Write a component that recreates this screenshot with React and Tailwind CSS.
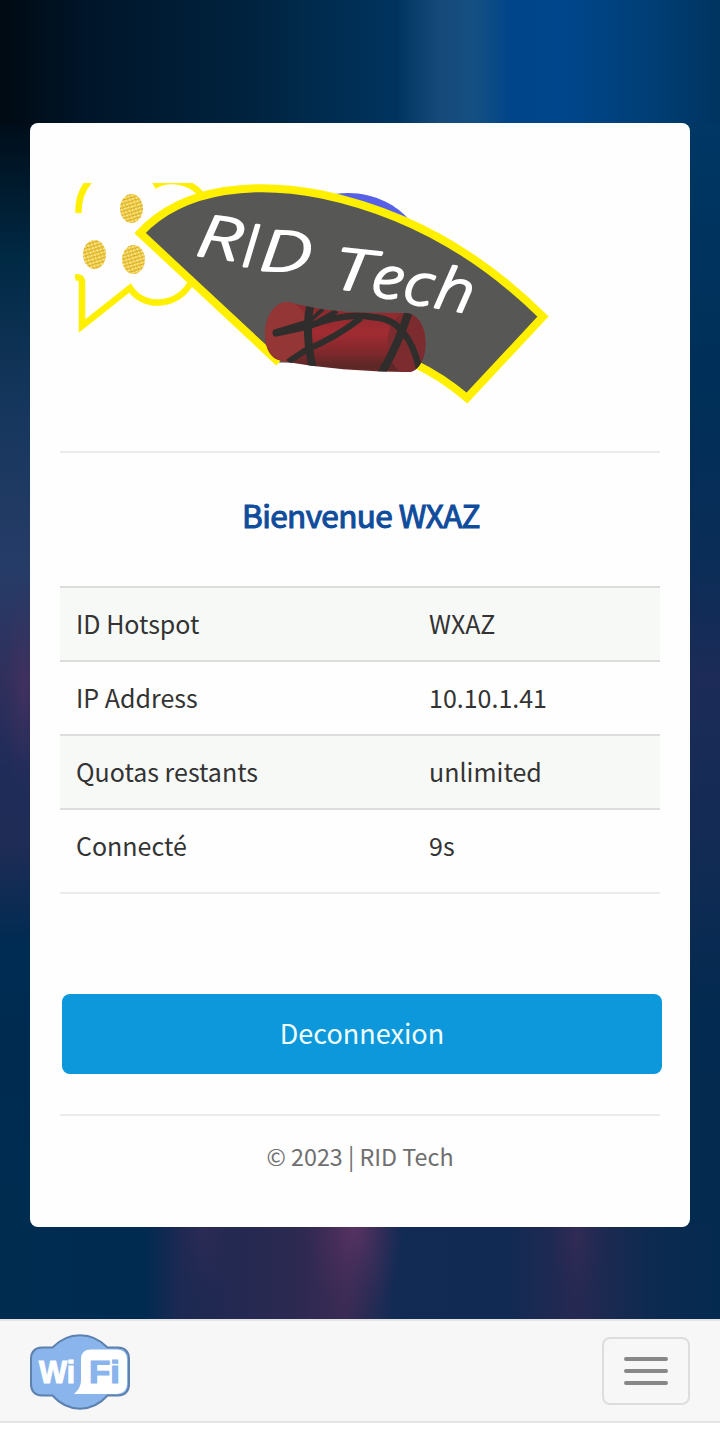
const rows = [
  ['ID Hotspot', 'WXAZ'],
  ['IP Address', '10.10.1.41'],
  ['Quotas restants', 'unlimited'],
  ['Connecté', '9s'],
];

const coins = [[131.5, 208.5], [94.5, 254.5], [133.5, 259.5]];

// character, x, baseline, rotation, horizontal stretch, font size
const letters = [
  ['R', 195, 255, 8, 1.34, 58],
  ['I', 241, 266, 4, 1.05, 59],
  ['D', 259, 270, 3, 1.38, 56],
  ['T', 332, 288, 6, 1.38, 57],
  ['e', 370, 296, 6, 1.15, 57],
  ['c', 402, 303, 6, 1.15, 57],
  ['h', 433, 307, 10, 1.16, 58],
];

function Logo() {
  return (
    <svg className="block" width="480" height="224" viewBox="75 183 480 224">
      <defs>
        <pattern id="grain" width="5" height="5" patternUnits="userSpaceOnUse" patternTransform="rotate(28)">
          <rect width="5" height="5" fill="#f0ce46" />
          <path d="M0 1h2M3 2.5h2M1 4h2" stroke="#d3a01a" strokeWidth="1" />
          <path d="M2.5 .6h1.5M0 3h1.5" stroke="#fff6c4" strokeWidth="1.3" />
        </pattern>
        <linearGradient id="barrel" x1="0" y1="0" x2="0" y2="1">
          <stop offset="0" stopColor="#84292c" />
          <stop offset=".45" stopColor="#a12c32" />
          <stop offset=".7" stopColor="#7f282b" />
          <stop offset=".88" stopColor="#5a2826" />
          <stop offset="1" stopColor="#7a2629" />
        </linearGradient>
        <clipPath id="roll">
          <path d="M288 302 C315 309 340 312 365 312.500 L405 313 C417 313 425.500 325 425.500 343 C425.500 361 417 372 409 372 C365 372 320 368 282 361 C270 359 265 348 265 334 C265 316 276 301 288 302Z" />
        </clipPath>
      </defs>
      <g fill="none" stroke="#fff000" strokeWidth="6.500">
        <path d="M78.500 213 C78 200 82 188 92 178" />
        <path d="M154 186 C170 177 190 181 201 194" />
        <path d="M75 277.500 Q82 276 82 283 L82 326 L130 288 C143 309 177 307 190 284" />
      </g>
      {coins.map(([cx, cy]) => (
        <ellipse key={cx} cx={cx} cy={cy} rx="11.500" ry="14.500" fill="url(#grain)" />
      ))}
      <path d="M335 194 C367 189 396 203 410 221 L380 215Z" fill="#5661e8" />
      <path d="M279 362.500 L140 233 C185 185 260 182 322 194.500 C405 212 480 254 543 316.500 L467 398 C448 382 434 373 415 364" fill="#575856" stroke="#fff000" strokeWidth="8" />
      <g fill="#fff" stroke="#fff" strokeWidth="2.400" strokeLinejoin="round" fontFamily="'Open Sans', sans-serif" fontStyle="italic" fontWeight="300">
        {letters.map(([c, x, y, r, k, s]) => (
          <text key={c} fontSize={s} transform={`translate(${x} ${y}) rotate(${r}) scale(${k} 1)`}>{c}</text>
        ))}
      </g>
      <g clipPath="url(#roll)">
        <rect x="260" y="298" width="170" height="78" fill="url(#barrel)" />
        <ellipse cx="286" cy="332" rx="22" ry="31" fill="#943536" />
        <ellipse cx="407" cy="343" rx="19.500" ry="30" fill="#7c2b2e" />
        <g fill="none" stroke="#2f2e2c" strokeWidth="6.500">
          <path d="M309 326 Q345 312 372 317 Q392 318 403 332 Q414 345 419 368" />
          <path d="M276 333 L309 326" strokeWidth="7" strokeLinecap="round" />
          <path d="M276 332 L309 322" strokeWidth="6" strokeLinecap="round" />
          <path d="M311 302 Q304 331 313 370" strokeWidth="8" />
          <path d="M361 318 Q335 338 306 350 L288 362" strokeWidth="6" />
          <path d="M337 311 L312 325" strokeWidth="5" />
          <path d="M323 309 L311 320" strokeWidth="4" />
          <path d="M409 311 Q398 345 381 374" strokeWidth="8" />
        </g>
      </g>
    </svg>
  );
}

function WifiBadge() {
  return (
    <svg className="mt-0.5 block" width="100" height="76" viewBox="0 0 100 76">
      <path d="M12 13.500 H22.500 C38 -3 62 -3 77.500 13.500 H88 Q99 14 99 25 V50 Q99 61 88 61.500 H77.500 C62 79 38 79 22.500 61.500 H12 Q1 61 1 50 V25 Q1 14 12 13.500Z" fill="#89b4ec" stroke="#5d82af" strokeWidth="2" />
      <path d="M61 15.500 H87 Q97 16 97 25 V50 Q97 59 87 60 H44 Q51 54 51 46 V25 Q51 15.500 61 15.500Z" fill="#fff" />
      <g fontFamily="'Liberation Sans', Arial, sans-serif" fontWeight="bold" fontSize="32" strokeWidth="1.200">
        <text x="9" y="48.500" textLength="36" lengthAdjust="spacingAndGlyphs" fill="#fff" stroke="#fff">Wi</text>
        <text x="59" y="48.500" textLength="31" lengthAdjust="spacingAndGlyphs" fill="#89b4ec" stroke="#89b4ec">Fi</text>
      </g>
    </svg>
  );
}

function Backdrop() {
  return (
    <svg className="absolute inset-0" width="720" height="1319" viewBox="0 0 720 1319">
      <defs>
        <linearGradient id="top">
          <stop offset="0" stopColor="#000a12" />
          <stop offset=".12" stopColor="#001529" />
          <stop offset=".35" stopColor="#00233f" />
          <stop offset=".55" stopColor="#00345f" />
          <stop offset=".61" stopColor="#164a7a" />
          <stop offset=".66" stopColor="#144f83" />
          <stop offset=".71" stopColor="#004589" />
          <stop offset=".78" stopColor="#00468c" />
          <stop offset=".9" stopColor="#003f76" />
          <stop offset="1" stopColor="#003460" />
        </linearGradient>
        <linearGradient id="left" x1="0" y1="0" x2="0" y2="1">
          <stop offset="0" stopColor="#000d19" />
          <stop offset=".12" stopColor="#002944" />
          <stop offset=".25" stopColor="#15365c" />
          <stop offset=".4" stopColor="#263c68" />
          <stop offset=".5" stopColor="#302f5c" />
          <stop offset=".58" stopColor="#1f2c59" />
          <stop offset=".65" stopColor="#1f2c55" />
          <stop offset=".74" stopColor="#002b52" />
          <stop offset="1" stopColor="#002c50" />
        </linearGradient>
        <linearGradient id="right" x1="0" y1="0" x2="0" y2="1">
          <stop offset="0" stopColor="#003764" />
          <stop offset=".25" stopColor="#002f58" />
          <stop offset=".4" stopColor="#0b2d57" />
          <stop offset=".5" stopColor="#1c2b58" />
          <stop offset=".65" stopColor="#122b55" />
          <stop offset=".8" stopColor="#032a50" />
          <stop offset="1" stopColor="#052a50" />
        </linearGradient>
        <linearGradient id="bottom">
          <stop offset="0" stopColor="#002c50" />
          <stop offset=".2" stopColor="#002b51" />
          <stop offset=".25" stopColor="#1c2952" />
          <stop offset=".4" stopColor="#2b2951" />
          <stop offset=".48" stopColor="#3a2b54" />
          <stop offset=".55" stopColor="#112b54" />
          <stop offset=".7" stopColor="#102a53" />
          <stop offset=".8" stopColor="#262952" />
          <stop offset=".9" stopColor="#0e2a50" />
          <stop offset="1" stopColor="#052a50" />
        </linearGradient>
        <radialGradient id="glow">
          <stop offset="0" stopColor="#613566" stopOpacity=".8" />
          <stop offset="1" stopColor="#4a2d5a" stopOpacity="0" />
        </radialGradient>
      </defs>
      <rect width="720" height="124" fill="url(#top)" />
      <rect y="123" width="360" height="1110" fill="url(#left)" />
      <rect x="360" y="123" width="360" height="1110" fill="url(#right)" />
      <ellipse cx="24" cy="690" rx="22" ry="110" fill="url(#glow)" opacity=".45" />
      <rect y="1225" width="720" height="94" fill="url(#bottom)" />
      <ellipse cx="355" cy="1225" rx="50" ry="95" fill="url(#glow)" />
      <ellipse cx="205" cy="1225" rx="30" ry="75" fill="url(#glow)" opacity=".25" />
      <ellipse cx="578" cy="1225" rx="28" ry="80" fill="url(#glow)" opacity=".25" />
    </svg>
  );
}

export default function App() {
  return (
    <div className="flex h-[1433px] w-[720px] flex-col bg-white font-['Noto_Sans_CJK_SC',sans-serif] text-[#333]">
      <main className="relative h-[1319px] px-[30px] pt-[123px]">
        <Backdrop />
        <section className="relative flex h-[1104px] flex-col rounded-lg bg-[#fefefe] px-[30px] pt-[60px]">
          <div className="h-[268px] pl-[15px]"><Logo /></div>
          <hr className="border-t-2 border-[#ebebeb]" />
          <h1 className="mt-[37px] pl-0.5 text-center text-[31.5px] leading-[48px] font-normal tracking-[-0.6px] text-[#0f4c9c] [-webkit-text-stroke:1.1px_#0f4c9c]">Bienvenue WXAZ</h1>
          <dl className="mt-[48px] text-[25px] leading-[36px]">
            {rows.map(([label, value]) => (
              <div key={label} className="flex h-[74px] items-center border-t-2 border-[#dcdddc] px-4 pb-0.5 odd:bg-[#f7f9f7]">
                <dt className="w-[353px]">{label}</dt>
                <dd>{value}</dd>
              </div>
            ))}
          </dl>
          <hr className="mt-[10px] border-t-2 border-[#ebebeb]" />
          <button className="mt-[100px] ml-[2px] h-[80px] w-[600px] shrink-0 rounded-lg bg-[#0c98da] pb-0.5 text-[27px] text-[#f0ffff]">Deconnexion</button>
          <hr className="mt-[40px] border-t-2 border-[#ebebeb]" />
          <p className="mt-[22px] text-center text-[23.3px] leading-[36px] text-[#6f6f6f]">© 2023 | RID Tech</p>
        </section>
      </main>
      <nav className="flex h-[104px] items-center justify-between border-y-2 border-[#e3e4e5] bg-[#f7f7f7] px-[30px]">
        <WifiBadge />
        <button aria-label="Menu" className="flex h-[68px] w-[88px] flex-col items-center justify-center gap-2 rounded-lg border-2 border-[#dddddd]">
          <span className="h-1 w-11 rounded-sm bg-[#888]" />
          <span className="h-1 w-11 rounded-sm bg-[#888]" />
          <span className="h-1 w-11 rounded-sm bg-[#888]" />
        </button>
      </nav>
    </div>
  );
}
